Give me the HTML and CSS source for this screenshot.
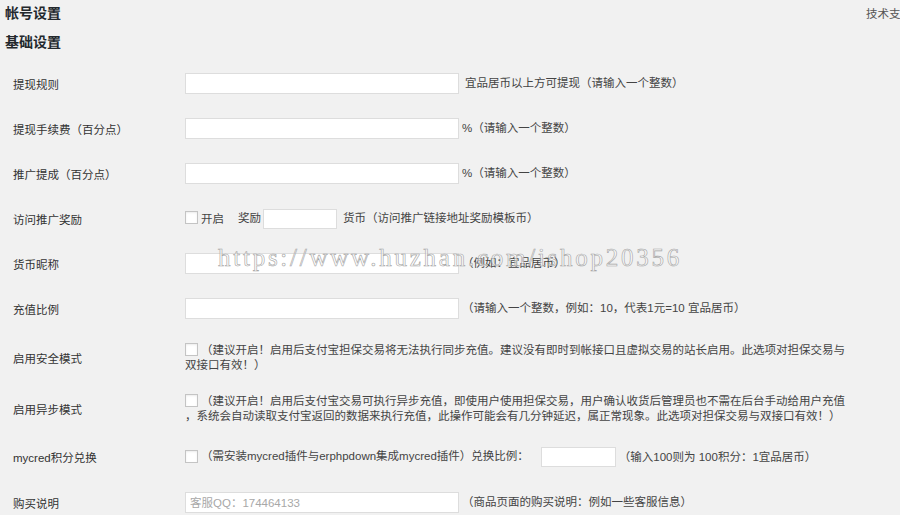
FILE: index.html
```html
<!DOCTYPE html>
<html lang="zh-CN">
<head>
<meta charset="utf-8">
<title>帐号设置</title>
<link rel="stylesheet" href="styles.css">
</head>
<body>
<div class="page">
  <div class="topbar">
    <h1 class="title">帐号设置</h1>
    <span class="support">技术支持</span>
  </div>
  <h2 class="section">基础设置</h2>

  <div class="form">
    <div class="row">
      <div class="label">提现规则</div>
      <div class="field"><input class="txt" type="text"><span class="desc d1">宜品居币以上方可提现（请输入一个整数）</span></div>
    </div>
    <div class="row">
      <div class="label">提现手续费（百分点）</div>
      <div class="field"><input class="txt" type="text"><span class="desc">%（请输入一个整数）</span></div>
    </div>
    <div class="row">
      <div class="label">推广提成（百分点）</div>
      <div class="field"><input class="txt" type="text"><span class="desc">%（请输入一个整数）</span></div>
    </div>
    <div class="row">
      <div class="label">访问推广奖励</div>
      <div class="field"><span class="cb"></span><span class="cbl">开启</span><span class="reward">奖励</span><input class="txt small" type="text"><span class="desc d1">货币（访问推广链接地址奖励模板币）</span></div>
    </div>
    <div class="row">
      <div class="label">货币昵称</div>
      <div class="field"><input class="txt" type="text"><span class="desc">（例如：宜品居币）</span></div>
    </div>
    <div class="row">
      <div class="label">充值比例</div>
      <div class="field"><input class="txt" type="text"><span class="desc">（请输入一个整数，例如：10，代表1元=10 宜品居币）</span></div>
    </div>
    <div class="row tall">
      <div class="label">启用安全模式</div>
      <div class="field"><span class="cb"></span>（建议开启！启用后支付宝担保交易将无法执行同步充值。建议没有即时到帐接口且虚拟交易的站长启用。此选项对担保交易与<br>双接口有效！）</div>
    </div>
    <div class="row mid">
      <div class="label">启用异步模式</div>
      <div class="field"><span class="cb"></span>（建议开启！启用后支付宝交易可执行异步充值，即使用户使用担保交易，用户确认收货后管理员也不需在后台手动给用户充值<br>，系统会自动读取支付宝返回的数据来执行充值，此操作可能会有几分钟延迟，属正常现象。此选项对担保交易与双接口有效！）</div>
    </div>
    <div class="row mid">
      <div class="label">mycred积分兑换</div>
      <div class="field"><span class="cb"></span>（需安装mycred插件与erphpdown集成mycred插件）兑换比例：<input class="txt small ratio" type="text"><span class="desc">（输入100则为 100积分：1宜品居币）</span></div>
    </div>
    <div class="row last">
      <div class="label">购买说明</div>
      <div class="field"><input class="txt" type="text" placeholder="客服QQ：174464133"><span class="desc">（商品页面的购买说明：例如一些客服信息）</span></div>
    </div>
  </div>

  <div class="watermark">https://www.huzhan.com/ishop20356</div>
</div>
</body>
</html>
```

FILE: styles.css
```css
html, body {
  margin: 0;
  background: #f1f1f1;
}

body {
  font-family: "Liberation Sans", "Noto Sans CJK SC", sans-serif;
  font-size: 11.5px;
  color: #444;
  overflow: hidden;
}

.page {
  position: relative;
}

.topbar {
  display: flex;
  justify-content: space-between;
  align-items: center;
  height: 25px;
  padding-left: 5px;
  margin-right: -12px;
}

.title,
.section {
  margin: 0;
  font-size: 14px;
  font-weight: bold;
  color: #23282d;
  font-family: "Noto Sans CJK SC", sans-serif;
}

.title {
  line-height: 25px;
}

.support {
  color: #555;
  font-family: "Noto Sans CJK SC", sans-serif;
}

.section {
  margin-top: 4px;
  padding-left: 5px;
  line-height: 24px;
}

.form {
  margin-top: 8px;
}

.row {
  display: flex;
  align-items: center;
  height: 45px;
}

.row.tall {
  height: 54px;
}

.row.mid {
  height: 48px;
}

.row.last {
  height: 43px;
}

.label {
  flex: none;
  width: 185px;
  padding-left: 13px;
  box-sizing: border-box;
  color: #333;
}

.field {
  line-height: 15px;
  white-space: nowrap;
}

.txt {
  width: 274px;
  height: 21px;
  box-sizing: border-box;
  margin: 0;
  padding: 0 4px;
  border: 1px solid #ddd;
  background: #fff;
  vertical-align: middle;
  font: inherit;
  color: #333;
  outline: none;
}

.txt.small {
  width: 74px;
  height: 20px;
}

.txt.ratio {
  width: 75px;
  margin-left: 12px;
}

.txt::placeholder {
  color: #a8a8a8;
}

.desc {
  margin-left: 3px;
  vertical-align: middle;
}

.desc.d1 {
  margin-left: 6px;
}

.cb {
  display: inline-block;
  width: 13px;
  height: 13px;
  box-sizing: border-box;
  margin-right: 3px;
  border: 1px solid #c4c4c4;
  background: #fff;
  box-shadow: inset 0 1px 2px rgba(0, 0, 0, 0.08);
  vertical-align: middle;
  position: relative;
  top: -1px;
}

.cbl {
  vertical-align: middle;
}

.reward {
  margin-left: 14px;
  margin-right: 2px;
  vertical-align: middle;
}

.watermark {
  position: absolute;
  left: 218px;
  top: 245px;
  font-family: "Liberation Serif", serif;
  font-size: 25px;
  line-height: 25px;
  letter-spacing: 2.75px;
  color: rgba(255, 255, 255, 0.6);
  -webkit-text-stroke: 0.6px #a4a4a4;
  white-space: nowrap;
  pointer-events: none;
}
```
